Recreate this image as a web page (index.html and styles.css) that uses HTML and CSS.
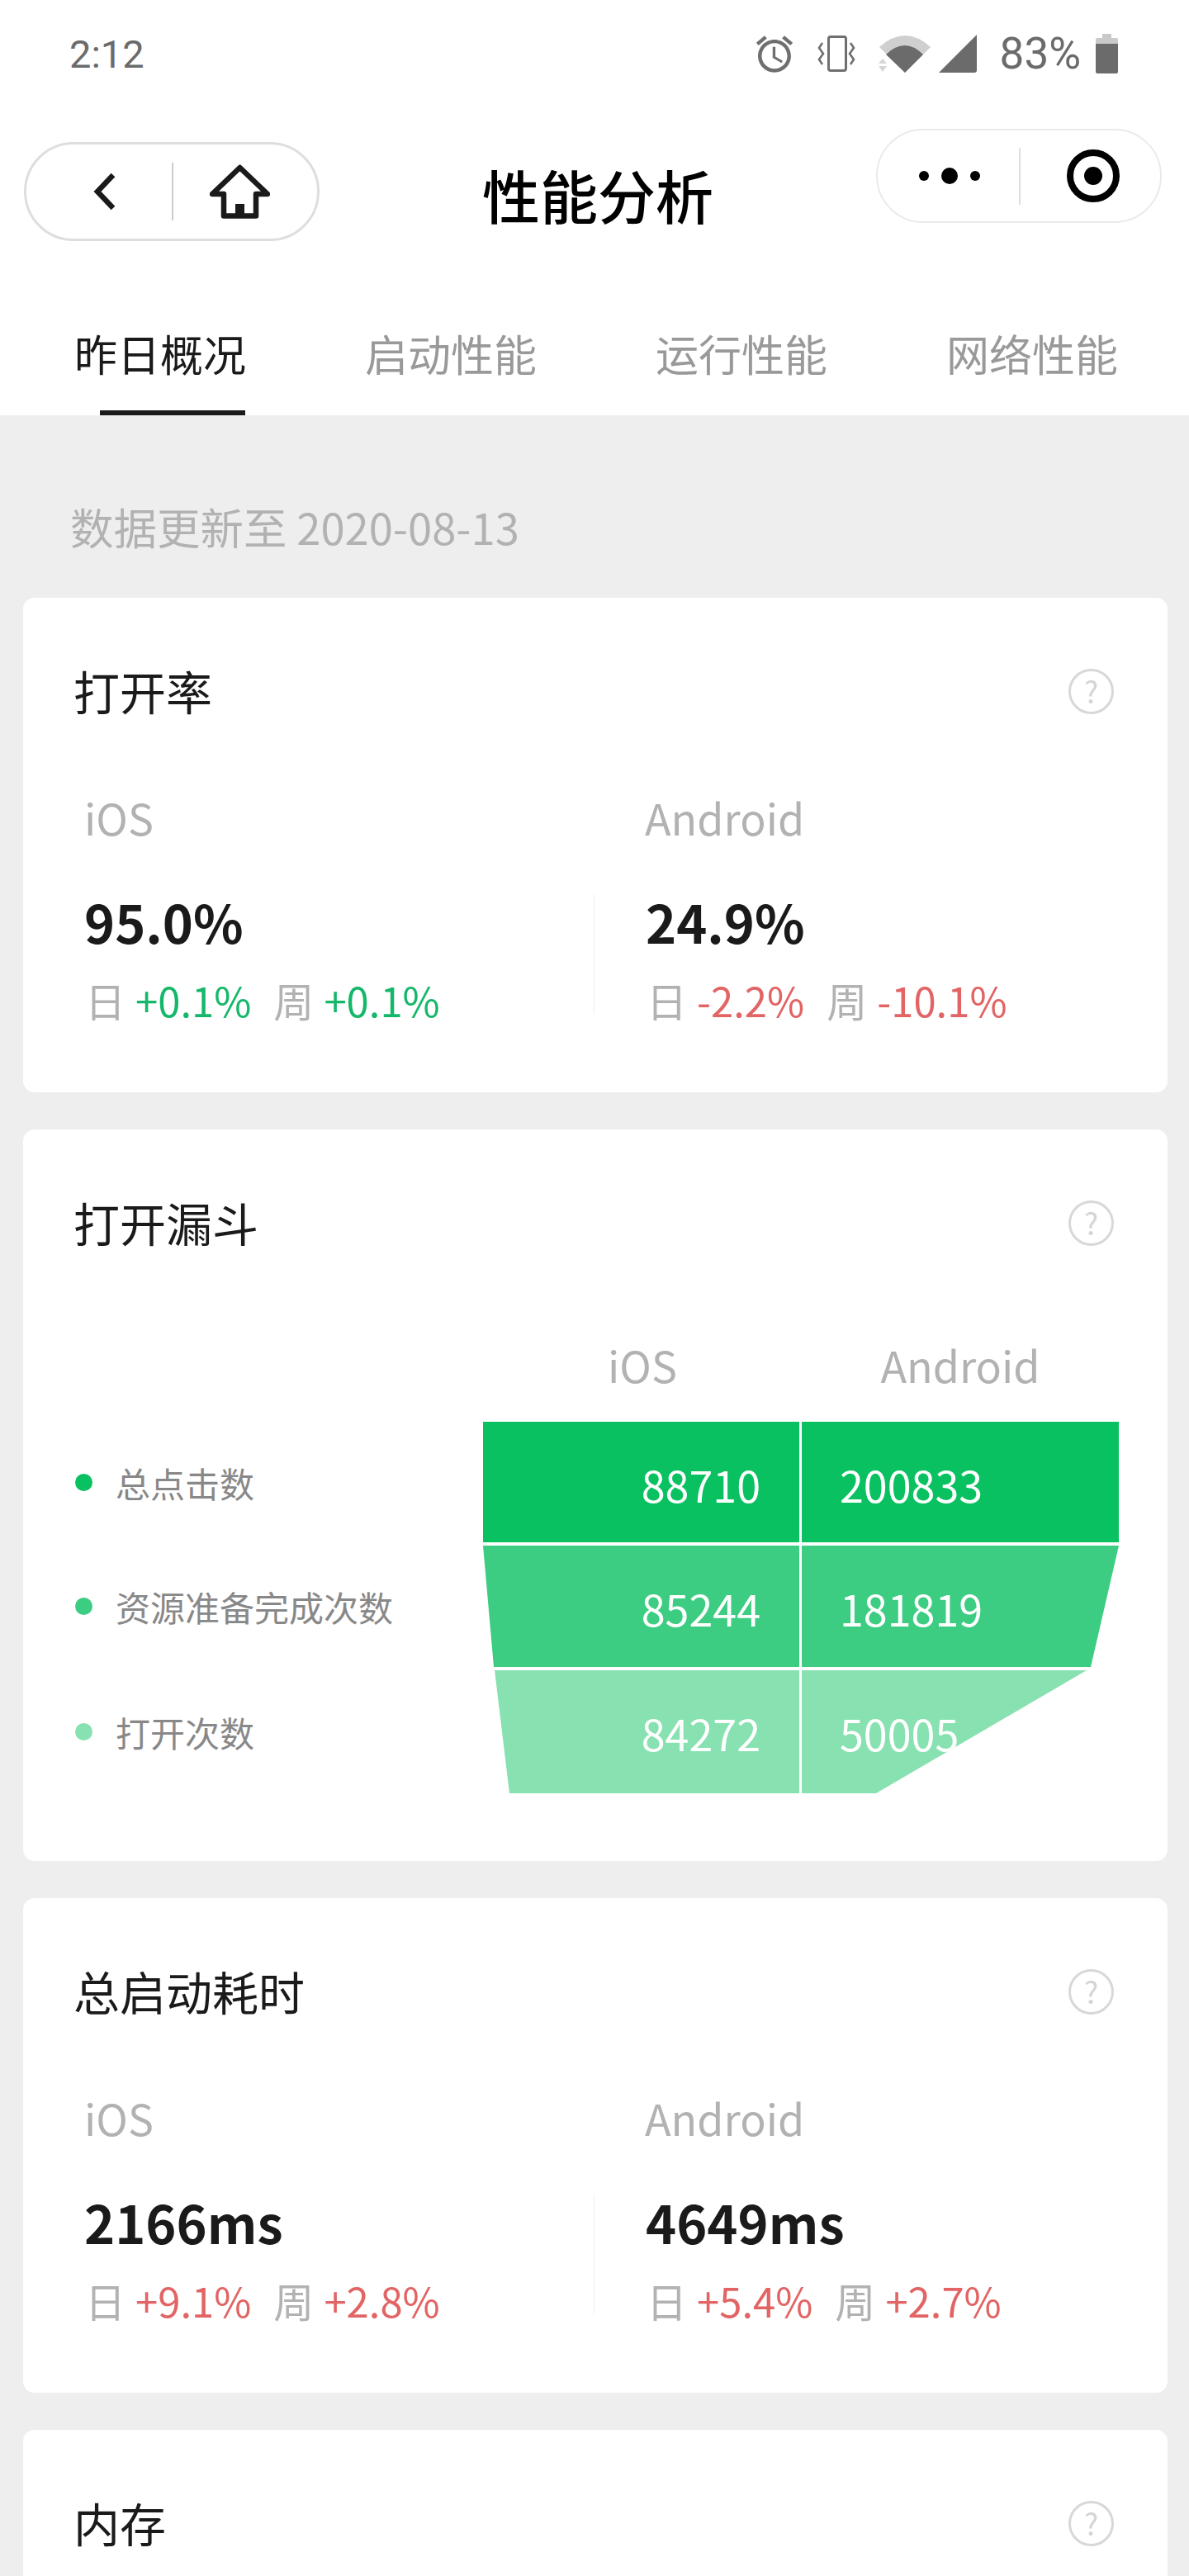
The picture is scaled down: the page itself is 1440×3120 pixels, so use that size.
FILE: index.html
```html
<!DOCTYPE html>
<html lang="zh-CN">
<head>
  <meta charset="UTF-8" />
  <meta name="viewport" content="width=device-width, initial-scale=1.0"/>
  <title>性能分析</title>
  <link rel="stylesheet" href="styles.css">
</head>
<body>

<div class="status">
  <span class="time">2:12</span>
  <div class="status-icons">
    <svg class="ic-alarm" viewBox="2 1.8 20 20.3" width="46" height="45"><path fill="#6f6f6f" d="M22 5.72l-4.6-3.86-1.29 1.53 4.6 3.86L22 5.72zM7.88 3.39L6.6 1.86 2 5.71l1.29 1.53 4.59-3.85zM12.5 8H11v6l4.75 2.85.75-1.23-4-2.37V8zM12 4c-4.97 0-9 4.03-9 9s4.02 9 9 9c4.97 0 9-4.03 9-9s-4.03-9-9-9zm0 16c-3.87 0-7-3.13-7-7s3.13-7 7-7 7 3.13 7 7-3.13 7-7 7z"/></svg>
    <svg class="ic-vibrate" viewBox="0 0 46 44" width="46" height="44"><rect x="13.5" y="1.5" width="21" height="41" rx="2.5" fill="none" stroke="#6f6f6f" stroke-width="3"/><path d="M6 9 L2 15 L7 22 L2 29 L6 35 M40 9 L44 15 L39 22 L44 29 L40 35" fill="none" stroke="#6f6f6f" stroke-width="2.6"/></svg>
    <svg class="ic-wifi" viewBox="0 0 63 45" width="63" height="45"><path fill="#cfcfcf" d="M32 45 L1 14 Q32 -14 63 14 Z"/><path fill="#6b6b6b" d="M32 45 L9 23 Q32 1 54 23 Z"/><path fill="#d6d6d6" d="M0 34 L5 28 L10 34 Z M0 37 L10 37 L5 44 Z"/></svg>
    <svg class="ic-signal" viewBox="0 0 46 46" width="46" height="46"><path fill="#6b6b6b" d="M0 46 L46 0 L46 43 Q46 46 43 46 Z"/></svg>
    <span class="battery-text">83%</span>
    <svg class="ic-battery" viewBox="0 0 27 48" width="27" height="48"><path fill="#c9c9c9" d="M8 0 H19 V5 H25 Q27 5 27 7 V12 H0 V7 Q0 5 2 5 H8 Z"/><path fill="#6b6b6b" d="M0 12 H27 V46 Q27 48 25 48 H2 Q0 48 0 46 Z"/></svg>
  </div>
</div>

<header class="nav">
  <div class="capsule capsule-left">
    <svg class="ic-back" viewBox="0 0 28 48" width="28" height="48"><path d="M24 4 L5 24 L24 44" fill="none" stroke="#1a1a1a" stroke-width="6.5"/></svg>
    <i class="capsule-line line-left"></i>
    <svg class="ic-home" viewBox="0 0 73 66" width="73" height="66"><path d="M3 36 L36.5 4 L70 36 L56 36 L56 62.500 L17 62.500 L17 36 Z" fill="none" stroke="#1a1a1a" stroke-width="6.500" stroke-linejoin="round"/><rect x="31" y="48" width="11" height="14" fill="#1a1a1a"/></svg>
  </div>
  <h1 class="nav-title">性能分析</h1>
  <div class="capsule capsule-right">
    <div class="dots"><i></i><i class="dot-big"></i><i></i></div>
    <i class="capsule-line line-right"></i>
    <div class="target"><i></i></div>
  </div>
</header>

<nav class="tabs">
  <a class="tab active">昨日概况</a>
  <a class="tab">启动性能</a>
  <a class="tab">运行性能</a>
  <a class="tab">网络性能</a>
</nav>

<main>
  <p class="updated">数据更新至 2020-08-13</p>

  <section class="card">
    <div class="card-head"><h2>打开率</h2><span class="help">?</span></div>
    <div class="stats">
      <div class="stat">
        <div class="stat-label">iOS</div>
        <div class="stat-body">
          <div class="stat-value">95.0%</div>
          <div class="delta">日<b class="up">+0.1%</b>周<b class="up">+0.1%</b></div>
        </div>
      </div>
      <div class="stat stat-android">
        <div class="stat-label">Android</div>
        <div class="stat-body">
          <div class="stat-value">24.9%</div>
          <div class="delta">日<b class="down">-2.2%</b>周<b class="down">-10.1%</b></div>
        </div>
      </div>
    </div>
  </section>

  <section class="card card-funnel">
    <div class="card-head"><h2>打开漏斗</h2><span class="help">?</span></div>
    <div class="funnel-head">
      <span>iOS</span>
      <span>Android</span>
    </div>
    <div class="funnel-row">
      <div class="legend"><i class="dot-1"></i>总点击数</div>
      <div class="bar bar-1"><span>88710</span><span>200833</span></div>
    </div>
    <div class="funnel-row">
      <div class="legend"><i class="dot-2"></i>资源准备完成次数</div>
      <div class="bar bar-2"><span>85244</span><span>181819</span></div>
    </div>
    <div class="funnel-row">
      <div class="legend"><i class="dot-3"></i>打开次数</div>
      <div class="bar bar-3"><span>84272</span><span>50005</span></div>
    </div>
  </section>

  <section class="card">
    <div class="card-head"><h2>总启动耗时</h2><span class="help">?</span></div>
    <div class="stats">
      <div class="stat">
        <div class="stat-label">iOS</div>
        <div class="stat-body">
          <div class="stat-value">2166ms</div>
          <div class="delta">日<b class="down">+9.1%</b>周<b class="down">+2.8%</b></div>
        </div>
      </div>
      <div class="stat stat-android">
        <div class="stat-label">Android</div>
        <div class="stat-body">
          <div class="stat-value">4649ms</div>
          <div class="delta">日<b class="down">+5.4%</b>周<b class="down">+2.7%</b></div>
        </div>
      </div>
    </div>
  </section>

  <section class="card">
    <div class="card-head"><h2>内存</h2><span class="help">?</span></div>
  </section>
</main>

</body>
</html>
```

FILE: styles.css
```css
* {
  box-sizing: border-box;
}

html, body {
  height: 3120px;
  overflow: hidden;
}

body {
  margin: 0;
  background: #fff;
  color: #1a1a1a;
  font-family: "Noto Sans CJK SC", "Noto Sans", sans-serif;
}

/* status bar */
.status {
  height: 130px;
  padding: 0 86px 0 84px;
  display: flex;
  justify-content: space-between;
  align-items: center;
  color: #6b6b6b;
  font-family: Roboto, sans-serif;
}

.time {
  font-size: 47px;
}

.status-icons {
  display: flex;
  align-items: center;
}

.ic-vibrate { margin-left: 29px; }
.ic-wifi { margin-left: 28px; }
.ic-signal { margin-left: 10px; }
.ic-battery { margin-left: 18px; }

.battery-text {
  margin-left: 28px;
  font-size: 53px;
}

/* nav bar */
.nav {
  height: 240px;
  padding: 0 33px 0 29px;
  display: flex;
  justify-content: space-between;
  align-items: flex-start;
}

.capsule {
  position: relative;
  border-radius: 60px;
  display: flex;
  align-items: center;
}

.capsule-left {
  width: 358px;
  height: 120px;
  margin-top: 42px;
  border: 3px solid #dedede;
}

.capsule-right {
  width: 346px;
  height: 114px;
  margin-top: 26px;
  border: 2px solid #eaeaea;
}

.capsule-line {
  width: 2px;
  background: #ccc;
}

.line-left {
  height: 70px;
  margin-left: 67px;
}

.line-right {
  height: 69px;
  margin-left: 47px;
  background: #ddd;
}

.ic-back { margin-left: 81px; }
.ic-home { margin-left: 44px; }

.dots {
  margin-left: 50px;
  width: 74px;
  display: flex;
  align-items: center;
  justify-content: space-between;
}

.dots i {
  width: 12px;
  height: 12px;
  border-radius: 50%;
  background: #000;
}

.dots .dot-big {
  width: 20px;
  height: 20px;
}

.target {
  margin-left: 56px;
  width: 64px;
  height: 64px;
  border: 8px solid #000;
  border-radius: 50%;
  display: flex;
  align-items: center;
  justify-content: center;
}

.target i {
  width: 22px;
  height: 22px;
  border-radius: 50%;
  background: #000;
}

.nav-title {
  margin: 60px 0 0;
  font-size: 70px;
  line-height: 92px;
  font-weight: 500;
  color: #000;
}

/* tabs */
.tabs {
  position: relative;
  height: 133px;
  padding: 22px 0 0 90px;
  display: flex;
  gap: 144px;
  font-size: 52px;
  line-height: 72px;
  color: #999;
}

.tab {
  width: 208px;
}

.tab.active {
  color: #1a1a1a;
}

.tab.active::after {
  content: "";
  position: absolute;
  left: 121px;
  bottom: 0;
  width: 176px;
  height: 6px;
  background: #1a1a1a;
}

/* content */
main {
  height: 2617px;
  padding: 98px 26px 0 28px;
  background: #eee;
}

.updated {
  margin: 0 0 51px 57px;
  font-size: 52.5px;
  line-height: 72px;
  color: #b2b2b2;
}

.card {
  background: #fff;
  border-radius: 14px;
  margin-bottom: 45px;
  padding-bottom: 95px;
}

.card-head {
  padding: 78px 65px 83px 61px;
  display: flex;
  justify-content: space-between;
  align-items: center;
}

.card-head h2 {
  margin: -1px 0 1px;
  font-size: 56px;
  line-height: 70px;
  font-weight: 400;
}

.help {
  width: 55px;
  height: 55px;
  border: 3px solid #d8d8d8;
  border-radius: 50%;
  font-size: 36px;
  line-height: 47px;
  text-align: center;
  color: #d4d4d4;
}

/* iOS / Android stats */
.stats {
  display: grid;
  grid-template-columns: 691px 1fr;
}

.stat {
  padding-left: 74px;
}

.stat-android {
  padding-left: 0;
}

.stat-label {
  font-size: 52px;
  line-height: 70px;
  color: #b2b2b2;
}

.stat-android .stat-label,
.stat-android .stat-body {
  padding-left: 62px;
}

.stat-android .stat-body {
  border-left: 1px solid #eee;
}

.stat-body {
  margin-top: 58px;
}

.stat-value {
  font-size: 63px;
  line-height: 66px;
  font-weight: 700;
}

.delta {
  margin-top: 45px;
  font-size: 49px;
  line-height: 34px;
  color: #b2b2b2;
  padding-left: 1px;
}

.delta b {
  font-weight: 400;
  margin: 0 27px 0 12px;
}

.up { color: #15b86a; }
.down { color: #e26464; }

/* funnel */
.card-funnel {
  padding-bottom: 82px;
}

.funnel-head {
  margin: 19px 0 34px 557px;
  display: grid;
  grid-template-columns: 386px 384px;
  font-size: 52px;
  line-height: 70px;
  color: #b2b2b2;
  text-align: center;
}

.funnel-row {
  display: flex;
  margin-top: 4px;
}

.funnel-head + .funnel-row {
  margin-top: 0;
}

.legend {
  width: 557px;
  padding-left: 63px;
  display: flex;
  align-items: center;
  gap: 28px;
  font-size: 42px;
  color: #888;
}

.legend i {
  width: 21px;
  height: 21px;
  border-radius: 50%;
}

.dot-1 { background: #09c160; }
.dot-2 { background: #3ccd82; }
.dot-3 { background: #88e1b1; }

.bar {
  width: 770px;
  display: grid;
  grid-template-columns: 383px 384px;
  gap: 3px;
  font-size: 52px;
  line-height: 140px;
  color: #fff;
}

.bar span {
  padding-top: 6px;
}

.bar span:first-child {
  padding-right: 47px;
  text-align: right;
}

.bar span:last-child {
  padding-left: 46px;
}

.bar-1 { height: 146px; }
.bar-1 span { background: #09c160; }

.bar-2 {
  height: 147px;
  clip-path: polygon(0 0, 770px 0, 736px 100%, 13px 100%);
}
.bar-2 span { background: #3ccd82; }

.bar-3 {
  height: 149px;
  clip-path: polygon(14px 0, 731px 0, 476px 100%, 32px 100%);
}
.bar-3 span { background: #88e1b1; }
```
